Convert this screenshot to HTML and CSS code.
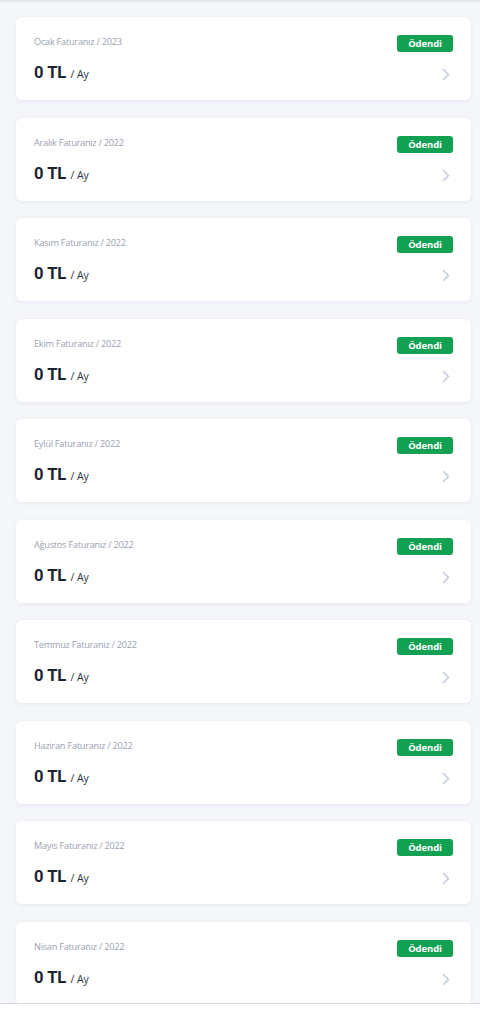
FILE: index.html
```html
<!DOCTYPE html>
<html lang="tr">
<head>
<meta charset="utf-8">
<title>Faturalar</title>
<link rel="stylesheet" href="styles.css">
</head>
<body>
<div class="page">
  <div class="list">
    <div class="card"><div class="info"><div class="title">Ocak Faturanız / 2023</div><div class="amount">0 TL <span class="unit">/ Ay</span></div></div><div class="side"><span class="badge">Ödendi</span><svg class="chev" width="8" height="13" viewBox="0 0 8 13"><path d="M1.5 1.5 L6.5 6.5 L1.5 11.5" fill="none" stroke="#c5cce0" stroke-width="1.6" stroke-linecap="round" stroke-linejoin="round"/></svg></div></div>
    <div class="card"><div class="info"><div class="title">Aralık Faturanız / 2022</div><div class="amount">0 TL <span class="unit">/ Ay</span></div></div><div class="side"><span class="badge">Ödendi</span><svg class="chev" width="8" height="13" viewBox="0 0 8 13"><path d="M1.5 1.5 L6.5 6.5 L1.5 11.5" fill="none" stroke="#c5cce0" stroke-width="1.6" stroke-linecap="round" stroke-linejoin="round"/></svg></div></div>
    <div class="card"><div class="info"><div class="title">Kasım Faturanız / 2022</div><div class="amount">0 TL <span class="unit">/ Ay</span></div></div><div class="side"><span class="badge">Ödendi</span><svg class="chev" width="8" height="13" viewBox="0 0 8 13"><path d="M1.5 1.5 L6.5 6.5 L1.5 11.5" fill="none" stroke="#c5cce0" stroke-width="1.6" stroke-linecap="round" stroke-linejoin="round"/></svg></div></div>
    <div class="card"><div class="info"><div class="title">Ekim Faturanız / 2022</div><div class="amount">0 TL <span class="unit">/ Ay</span></div></div><div class="side"><span class="badge">Ödendi</span><svg class="chev" width="8" height="13" viewBox="0 0 8 13"><path d="M1.5 1.5 L6.5 6.5 L1.5 11.5" fill="none" stroke="#c5cce0" stroke-width="1.6" stroke-linecap="round" stroke-linejoin="round"/></svg></div></div>
    <div class="card"><div class="info"><div class="title">Eylül Faturanız / 2022</div><div class="amount">0 TL <span class="unit">/ Ay</span></div></div><div class="side"><span class="badge">Ödendi</span><svg class="chev" width="8" height="13" viewBox="0 0 8 13"><path d="M1.5 1.5 L6.5 6.5 L1.5 11.5" fill="none" stroke="#c5cce0" stroke-width="1.6" stroke-linecap="round" stroke-linejoin="round"/></svg></div></div>
    <div class="card"><div class="info"><div class="title">Ağustos Faturanız / 2022</div><div class="amount">0 TL <span class="unit">/ Ay</span></div></div><div class="side"><span class="badge">Ödendi</span><svg class="chev" width="8" height="13" viewBox="0 0 8 13"><path d="M1.5 1.5 L6.5 6.5 L1.5 11.5" fill="none" stroke="#c5cce0" stroke-width="1.6" stroke-linecap="round" stroke-linejoin="round"/></svg></div></div>
    <div class="card"><div class="info"><div class="title">Temmuz Faturanız / 2022</div><div class="amount">0 TL <span class="unit">/ Ay</span></div></div><div class="side"><span class="badge">Ödendi</span><svg class="chev" width="8" height="13" viewBox="0 0 8 13"><path d="M1.5 1.5 L6.5 6.5 L1.5 11.5" fill="none" stroke="#c5cce0" stroke-width="1.6" stroke-linecap="round" stroke-linejoin="round"/></svg></div></div>
    <div class="card"><div class="info"><div class="title">Haziran Faturanız / 2022</div><div class="amount">0 TL <span class="unit">/ Ay</span></div></div><div class="side"><span class="badge">Ödendi</span><svg class="chev" width="8" height="13" viewBox="0 0 8 13"><path d="M1.5 1.5 L6.5 6.5 L1.5 11.5" fill="none" stroke="#c5cce0" stroke-width="1.6" stroke-linecap="round" stroke-linejoin="round"/></svg></div></div>
    <div class="card"><div class="info"><div class="title">Mayıs Faturanız / 2022</div><div class="amount">0 TL <span class="unit">/ Ay</span></div></div><div class="side"><span class="badge">Ödendi</span><svg class="chev" width="8" height="13" viewBox="0 0 8 13"><path d="M1.5 1.5 L6.5 6.5 L1.5 11.5" fill="none" stroke="#c5cce0" stroke-width="1.6" stroke-linecap="round" stroke-linejoin="round"/></svg></div></div>
    <div class="card"><div class="info"><div class="title">Nisan Faturanız / 2022</div><div class="amount">0 TL <span class="unit">/ Ay</span></div></div><div class="side"><span class="badge">Ödendi</span><svg class="chev" width="8" height="13" viewBox="0 0 8 13"><path d="M1.5 1.5 L6.5 6.5 L1.5 11.5" fill="none" stroke="#c5cce0" stroke-width="1.6" stroke-linecap="round" stroke-linejoin="round"/></svg></div></div>
  </div>
</div>
</body>
</html>
```

FILE: styles.css
```css
* { box-sizing: border-box; }
html, body {
  margin: 0;
  padding: 0;
  background: #ffffff;
}
body {
  font-family: "Open Sans", "Noto Sans", sans-serif;
}
.page {
  height: 1004px;
  border-top: 2px solid #e3e5e9;
  border-bottom: 1px solid #d8dbe0;
  background: #f4f6fa;
  overflow: hidden;
  padding: 15px 9px 0 16px;
}
.list {
  display: flex;
  flex-direction: column;
  gap: 17.5px;
}
.card {
  background: #ffffff;
  border-radius: 6px;
  box-shadow: 0 1px 4px rgba(30, 40, 70, 0.07);
  display: flex;
  justify-content: space-between;
  padding: 18px 18px 16px 18px;
  height: 83px;
  flex-shrink: 0;
}
.info {
  display: flex;
  flex-direction: column;
}
.title {
  font-size: 9.2px;
  line-height: 14px;
  color: #9aa2b1;
  letter-spacing: -0.25px;
}
.amount {
  margin-top: 13px;
  font-family: Roboto, "Liberation Sans", sans-serif;
  font-weight: 700;
  font-size: 16.5px;
  line-height: 22px;
  color: #1b2330;
}
.unit {
  font-family: "Open Sans", sans-serif;
  font-weight: 400;
  font-size: 10.5px;
  color: #2a3340;
}
.side {
  display: flex;
  flex-direction: column;
  align-items: flex-end;
}
.badge {
  display: block;
  width: 56px;
  height: 17px;
  border-radius: 3px;
  background: #12a052;
  color: #ffffff;
  font-size: 9.5px;
  font-weight: 700;
  line-height: 17px;
  text-align: center;
  letter-spacing: -0.1px;
}
.chev {
  display: block;
  margin-top: 16px;
  margin-right: 3px;
}
```
